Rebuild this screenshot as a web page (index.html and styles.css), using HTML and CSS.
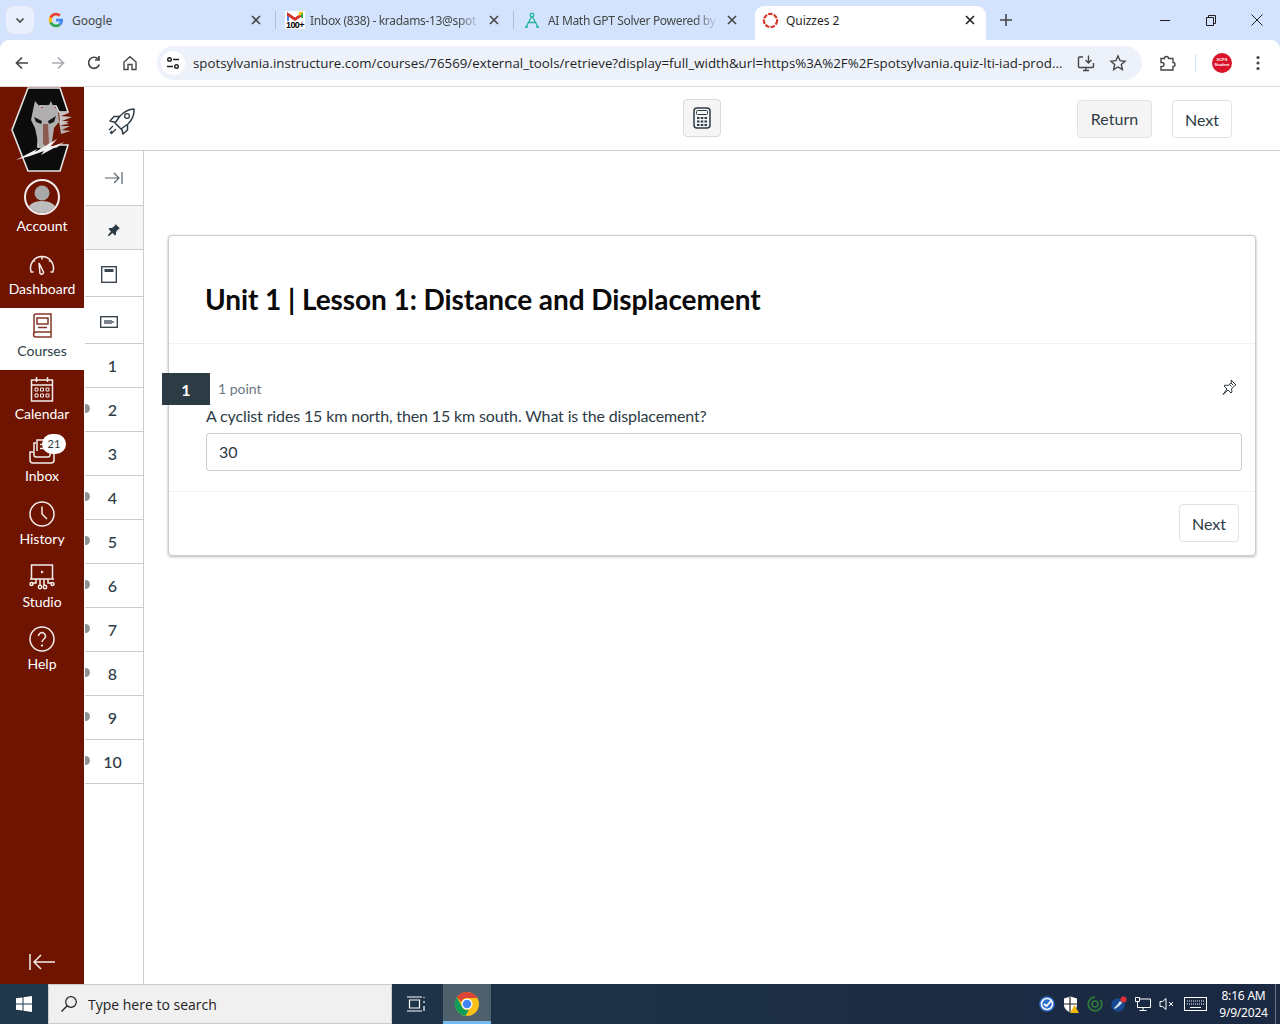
FILE: index.html
```html
<!DOCTYPE html>
<html lang="en">
<head>
<meta charset="utf-8">
<title>Quizzes 2</title>
<link rel="stylesheet" href="styles.css">
</head>
<body>
<div class="tabstrip">
  <div class="tab-search"><svg width="12" height="12" viewBox="0 0 12 12"><path d="M2.500 4.500 6 8l3.500-3.500" class="s-dark2"/></svg></div>
  <div class="tab">
    <svg class="fav" width="16" height="16" viewBox="0 0 48 48"><path fill="#4285F4" d="M45 24.500c0-1.600-.1-3.100-.4-4.500H24v8.500h11.800c-.5 2.700-2 5-4.400 6.600l7.100 5.500c4.100-3.800 6.500-9.500 6.500-16.100z"/><path fill="#34A853" d="M24 46c5.900 0 10.900-2 14.500-5.300l-7.100-5.500c-2 1.300-4.500 2.100-7.400 2.100-5.700 0-10.500-3.800-12.200-9H4.500v5.700C8.100 41.100 15.500 46 24 46z"/><path fill="#FBBC05" d="M11.800 28.200c-.9-2.700-.9-5.700 0-8.400v-5.700H4.500c-3 6-3 13.800 0 19.800z"/><path fill="#EA4335" d="M24 10.800c3.200 0 6.100 1.100 8.400 3.300l6.300-6.300C34.900 4.200 29.900 2 24 2 15.500 2 8.100 6.900 4.500 14.100l7.300 5.700c1.700-5.200 6.500-9 12.200-9z"/></svg>
    <span class="tab-title">Google</span>
    <svg class="tab-x" width="10" height="10" viewBox="0 0 10 10"><path d="M1 1l8 8M9 1l-8 8" class="s-dark2"/></svg>
  </div>
  <div class="tab tab-sep">
    <span class="gmail"><svg width="18" height="10" viewBox="0 0 18 10"><path fill="#4a86e8" d="M1 3h2v7H1z"/><path fill="#D93025" d="M1 1l8 5.500L17 1v3.500L9 10 1 4.500z"/><path fill="#FBBC04" d="M13 1h2l2-0.500v3L13 5z"/><path fill="#34A853" d="M15 3l2-1v5h-2z"/></svg><b class="gmail-count">100+</b></span>
    <span class="tab-title tab-fade">Inbox (838) - kradams-13@spot</span>
    <svg class="tab-x" width="10" height="10" viewBox="0 0 10 10"><path d="M1 1l8 8M9 1l-8 8" class="s-dark2"/></svg>
  </div>
  <div class="tab tab-sep">
    <svg class="fav" width="16" height="17" viewBox="0 0 16 17"><path d="M8 4 2 15M8 4l6 11M4.500 10.500h7M1 15h3M12 15h3" fill="none" stroke="#27b5a0" stroke-width="1.400"/><circle cx="8" cy="3" r="1.800" fill="none" stroke="#27b5a0" stroke-width="1.300"/></svg>
    <span class="tab-title tab-fade">AI Math GPT Solver Powered by</span>
    <svg class="tab-x" width="10" height="10" viewBox="0 0 10 10"><path d="M1 1l8 8M9 1l-8 8" class="s-dark2"/></svg>
  </div>
  <div class="tab tab-active">
    <svg class="fav fav-active" width="17" height="17" viewBox="0 0 17 17"><circle cx="8.500" cy="8.500" r="6.600" fill="none" stroke="#d33a2c" stroke-width="2.200" stroke-dasharray="4.500 1.200"/></svg>
    <span class="tab-title tab-title-active">Quizzes 2</span>
    <svg class="tab-x" width="10" height="10" viewBox="0 0 10 10"><path d="M1 1l8 8M9 1l-8 8" class="s-black"/></svg>
  </div>
  <div class="tab-new"><svg width="12" height="12" viewBox="0 0 12 12"><path d="M6 0v12M0 6h12" class="s-dark2"/></svg></div>
  <div class="winctl">
    <span class="winbtn"><svg width="10" height="10" viewBox="0 0 10 10"><path d="M0 5.500h10" class="s-thin"/></svg></span>
    <span class="winbtn"><svg width="10" height="11" viewBox="0 0 10 11"><path d="M.5 2.500h7v8h-7zM2.500 2.500v-2h7v8h-2" class="s-thin"/></svg></span>
    <span class="winbtn"><svg width="12" height="12" viewBox="0 0 12 12"><path d="M.5.500l11 11M11.500.500l-11 11" class="s-thin"/></svg></span>
  </div>
</div>

<div class="toolbar">
  <div class="navbtns">
    <span class="tbtn"><svg width="16" height="16" viewBox="0 0 16 16"><path d="M14 8H2.500M8 2.500 2.500 8 8 13.500" class="s-tool"/></svg></span>
    <span class="tbtn"><svg width="16" height="16" viewBox="0 0 16 16"><path d="M2 8h11.500M8 2.500 13.500 8 8 13.500" class="s-tool s-muted"/></svg></span>
    <span class="tbtn"><svg width="16" height="16" viewBox="0 0 16 16"><path d="M13.300 9.500A5.500 5.500 0 1 1 12 3.900M13 1v4H9" class="s-tool"/></svg></span>
    <span class="tbtn"><svg width="16" height="16" viewBox="0 0 16 16"><path d="M2 7 8 1.800 14 7v7.500H10V9.500H6v5H2z" class="s-tool s-thin15"/></svg></span>
  </div>
  <div class="omnibox">
    <span class="site-ic"><svg width="14" height="14" viewBox="0 0 14 14"><circle cx="3.500" cy="3.500" r="1.800" class="s-site"/><path d="M7 3.500h6M1 10.500h6" class="s-site"/><circle cx="10.500" cy="10.500" r="1.800" class="s-site"/></svg></span>
    <span class="url">spotsylvania.instructure.com/courses/76569/external_tools/retrieve?display=full_width&amp;url=https%3A%2F%2Fspotsylvania.quiz-lti-iad-prod...</span>
    <svg class="omni-ic" width="18" height="18" viewBox="0 0 18 18"><path d="M6 3H2.500A1 1 0 0 0 1.500 4v8.500a1 1 0 0 0 1 1h13a1 1 0 0 0 1-1V9M6 16.500h6M9 13.500v3M11.500 1.500v7M8.500 6l3 3 3-3" class="s-tool s-thin15"/></svg>
    <svg class="omni-ic" width="18" height="18" viewBox="0 0 18 18"><path d="M9 2l2.100 4.700 5 .5-3.800 3.400 1.100 5L9 13l-4.400 2.600 1.100-5L1.900 7.200l5-.5z" class="s-tool s-thin15"/></svg>
  </div>
  <span class="tbtn tbtn-ext"><svg width="18" height="18" viewBox="0 0 18 18"><path d="M3 4.500h3.500a2 2 0 0 1 4 0H15v4a2 2 0 0 1 0 4v3.500H3v-3.500h1a2 2 0 0 0 0-4H3z" class="s-tool s-thin15"/></svg></span>
  <span class="tool-sep"></span>
  <span class="profile"><span class="profile-text">SCPS<br>Student</span></span>
  <span class="tbtn tbtn-menu"><svg width="4" height="16" viewBox="0 0 4 16"><circle cx="2" cy="2.500" r="1.600" fill="#444746"/><circle cx="2" cy="8" r="1.600" fill="#444746"/><circle cx="2" cy="13.500" r="1.600" fill="#444746"/></svg></span>
</div>

<div class="app">
  <nav class="sidenav">
    <svg class="logo" width="64" height="86" viewBox="0 0 64 86">
      <path d="M51 47 61 44 52 43 60 39 51 39 59 34 49 34z" fill="#b5b0ae"/>
      <path d="M18 1H50L58 25H49L46 19H30L28 60H46L49 58H58L50 84H18L2 43z" fill="#0c0c0c" stroke="#e4e4e4" stroke-width="1.600"/>
      <path d="M25 14l6 7 8-3 2-4 2 5 5 4 1 12-5 6-2 14-3 8h-8l-3-8-3-14-4-8 2-10z" fill="#b0aeae"/>
      <path d="M24 30l8 4-1 3-5-2zM46 29l-8 5 1 3 5-2z" fill="#161616"/>
      <path d="M33 37h5l1 19-3 5-3-5z" fill="#8c5a50"/>
      <path d="M49 24l10 2-8 3 11 1-10 4 7 3-9 1z" fill="#c9c4c2"/>
      <path d="M6 73 27 62l-2 3 22-13-7 8 15-5-24 13 3-4-14 5z" fill="#f2f2f2"/>
    </svg>
    <a class="nav-item nav-account">
      <span class="avatar"><svg width="32" height="32" viewBox="0 0 32 32"><circle cx="16" cy="12" r="7.500" fill="#a8a8a8"/><path d="M1 32c0-8 6-12 15-12s15 4 15 12z" fill="#bdbdbd"/></svg></span>
      <span class="nav-label">Account</span>
    </a>
    <a class="nav-item">
      <svg class="nav-ic" width="26" height="24" viewBox="0 0 26 24"><path d="M4.500 19H2.200A11.500 11.500 0 1 1 23.800 19H21.500M13 6.500V4M6 8.500l-1.500-1.500M20 8.500 21.500 7M10 10l4.500 9a2 2 0 0 1-3.500 1.500z" class="s-nav"/></svg>
      <span class="nav-label">Dashboard</span>
    </a>
    <a class="nav-item nav-active">
      <svg class="nav-ic" width="22" height="26" viewBox="0 0 22 26"><path d="M3 21V3a2 2 0 0 1 2-2h15v18H5a2.500 2.500 0 0 0 0 5h15v-5M6 5h11v6H6zM7 14.500h9" class="s-active"/></svg>
      <span class="nav-label">Courses</span>
    </a>
    <a class="nav-item">
      <svg class="nav-ic" width="24" height="26" viewBox="0 0 24 26"><path d="M1.500 4h21v21h-21zM1.500 9h21M6.500 1v5M17.500 1v5" class="s-nav"/><path d="M5 12h3v3H5zM10.500 12h3v3h-3zM16 12h3v3h-3zM5 18h3v3H5zM10.500 18h3v3h-3zM16 18h3v3h-3z" class="s-nav s-thin-nav"/></svg>
      <span class="nav-label">Calendar</span>
    </a>
    <a class="nav-item">
      <svg class="nav-ic" width="26" height="26" viewBox="0 0 26 26"><path d="M5 13V5h2M8 13V2h12v11M11 6.500h6M11 10.500h6" class="s-nav"/><path d="M1 14h4v3a2 2 0 0 0 2 2h12a2 2 0 0 0 2-2v-3h4v8a3 3 0 0 1-3 3H4a3 3 0 0 1-3-3z" class="s-nav"/></svg>
      <span class="nav-label">Inbox</span>
      <span class="badge">21</span>
    </a>
    <a class="nav-item">
      <svg class="nav-ic" width="26" height="26" viewBox="0 0 26 26"><circle cx="13" cy="13" r="12" class="s-nav"/><path d="M13 5.500V13l5 5" class="s-nav"/></svg>
      <span class="nav-label">History</span>
    </a>
    <a class="nav-item">
      <svg class="nav-ic" width="26" height="26" viewBox="0 0 26 26"><path d="M2.500 1h21v14h-21zM1 15h24M7 15v4H3.500M11 15v6M15 15v6M19 15v4h3.500" class="s-nav"/><circle cx="2.500" cy="20" r="1.500" class="s-nav"/><circle cx="11" cy="23" r="1.700" class="s-nav"/><circle cx="16" cy="23" r="1.700" class="s-nav"/><circle cx="23.500" cy="20" r="1.500" class="s-nav"/><path d="M12 6.500l3 1.500-3 1.500z" fill="#fff"/></svg>
      <span class="nav-label">Studio</span>
    </a>
    <a class="nav-item">
      <svg class="nav-ic" width="26" height="26" viewBox="0 0 26 26"><circle cx="13" cy="13" r="12" class="s-nav"/><path d="M9.500 10a3.500 3.500 0 1 1 5.500 3c-1.300.9-2 1.500-2 3" class="s-nav"/><circle cx="13" cy="19.500" r="1.100" fill="#fff"/></svg>
      <span class="nav-label">Help</span>
    </a>
    <svg class="nav-collapse" width="26" height="18" viewBox="0 0 26 18"><path d="M1 1v16M26 9H5M12 2 5 9l7 7" class="s-nav"/></svg>
  </nav>

  <div class="content">
    <header class="quiz-top">
      <svg class="rocket" width="30" height="30" viewBox="0 0 30 30"><path d="M27 2c.5 6-2 11-6 15l-7 5-6-6 5-7c4-4 9-7 14-7zM12.500 9.500H7L3 14l6 1.500M20.500 17.500V23l-4.500 4-1.500-6" fill="none" stroke="#2d3b45" stroke-width="1.500" stroke-linejoin="round"/><circle cx="20" cy="9" r="2.400" fill="none" stroke="#2d3b45" stroke-width="1.300"/><path d="M6 19l-4 4M9 22l-5 5M5 24l-2 2" fill="none" stroke="#2d3b45" stroke-width="1.300"/></svg>
      <span class="calc"><svg width="18" height="22" viewBox="0 0 18 22"><rect x="1" y="1" width="16" height="20" rx="3" fill="none" stroke="#2d3b45" stroke-width="1.500"/><rect x="3.500" y="3.500" width="11" height="4" rx="1" fill="none" stroke="#2d3b45"/><path d="M4 10h2.500v2H4zM7.800 10h2.500v2H7.800zM11.500 10H14v2h-2.500zM4 13.500h2.500v2H4zM7.800 13.500h2.500v2H7.800zM11.500 13.500H14v2h-2.500zM4 17h2.500v2H4zM7.800 17h2.500v2H7.800zM11.500 17H14v2h-2.500z" fill="#2d3b45"/></svg></span>
      <div class="top-actions">
        <button class="btn btn-return">Return</button>
        <button class="btn btn-next">Next</button>
      </div>
    </header>
    <div class="quiz-body">
      <aside class="rail">
        <div class="rail-row rail-collapse"><svg width="18" height="14" viewBox="0 0 18 14"><path d="M0 7h14M9 2l5 5-5 5M17 1v12" fill="none" stroke="#56646e" stroke-width="1.200"/></svg></div>
        <div class="rail-row rail-pin"><svg width="14" height="14" viewBox="0 0 14 14"><path d="M8.500 1 13 5.500l-1.500.5-2.500 3v2.500l-1 1L5.500 10 2 13l-1 0 0-1 3-3.500-2.500-2.500 1-1H5l3-2.500z" fill="#2d3b45"/></svg></div>
        <div class="rail-row rail-tall"><svg width="16" height="17" viewBox="0 0 16 17"><rect x=".7" y=".7" width="14.600" height="15.600" fill="none" stroke="#3c4851" stroke-width="1.400"/><rect x="3.500" y="3" width="9" height="3" fill="#3c4851"/></svg></div>
        <div class="rail-row rail-tall"><svg width="18" height="12" viewBox="0 0 18 12"><rect x=".7" y=".7" width="16.600" height="10.600" fill="none" stroke="#2d3b45" stroke-width="1.300"/><path d="M4 4h8v1h2v2h-2v1H4z" fill="#7a858d"/></svg></div>
        <div class="rail-row rail-num">1</div>
        <div class="rail-row rail-num rail-mark">2</div>
        <div class="rail-row rail-num">3</div>
        <div class="rail-row rail-num rail-mark">4</div>
        <div class="rail-row rail-num rail-mark">5</div>
        <div class="rail-row rail-num rail-mark">6</div>
        <div class="rail-row rail-num rail-mark">7</div>
        <div class="rail-row rail-num rail-mark">8</div>
        <div class="rail-row rail-num rail-mark">9</div>
        <div class="rail-row rail-num rail-mark">10</div>
      </aside>
      <main class="stage">
        <section class="card">
          <h1 class="card-title">Unit 1 | Lesson 1: Distance and Displacement</h1>
          <div class="question">
            <div class="q-head">
              <span class="q-num">1</span>
              <span class="q-points">1 point</span>
              <svg class="q-pin" width="18" height="18" viewBox="0 0 18 18"><path d="M11 2l5 5-1.500.5-3 3.500.5 3-1 1-3-3-5 4.500L7 11 4 8l1-1 3 .5L11.500 4.500zM11 5l2 2M9.500 6.500l2 2" fill="none" stroke="#2d3b45" stroke-width="1"/></svg>
            </div>
            <p class="q-text">A cyclist rides 15 km north, then 15 km south. What is the displacement?</p>
            <div class="q-input">30</div>
          </div>
          <div class="card-foot"><button class="btn btn-foot">Next</button></div>
        </section>
      </main>
    </div>
  </div>
</div>

<footer class="taskbar">
  <span class="start"><svg width="16" height="16" viewBox="0 0 16 16"><path d="M0 2.300 6.500 1.400V7.500H0zM7.500 1.200 16 0V7.500H7.500zM0 8.500H6.500V14.600L0 13.700zM7.500 8.500H16V16L7.500 14.800z" fill="#fff"/></svg></span>
  <div class="search"><svg width="18" height="18" viewBox="0 0 18 18"><circle cx="11" cy="7" r="5.300" fill="none" stroke="#222" stroke-width="1.200"/><path d="M7.200 10.800 1.500 16.500" stroke="#222" stroke-width="1.300"/></svg><span class="search-text">Type here to search</span></div>
  <span class="taskview"><svg width="18" height="16" viewBox="0 0 18 16"><path d="M2.500 4h10v8h-10zM0 1h15M0 15h15M17 1v1M17 5v2M17 10v5" fill="none" stroke="#fff" stroke-width="1.200"/></svg></span>
  <span class="chrome"><svg width="24" height="24" viewBox="0 0 24 24"><circle cx="12" cy="12" r="12" fill="#FBC116"/><path d="M12 0a12 12 0 0 1 10.400 6H12a6 6 0 0 0-5.700 4.100L1.900 5.300A12 12 0 0 1 12 0z" fill="#DB4437"/><path d="M1.900 5.300 7 14.800a6 6 0 0 0 6.800 3L10.600 24A12 12 0 0 1 1.900 5.300z" fill="#0F9D58"/><circle cx="12" cy="12" r="5.500" fill="#fff"/><circle cx="12" cy="12" r="4.300" fill="#4285F4"/></svg></span>
  <div class="tray">
    <svg class="tray-ic" width="16" height="16" viewBox="0 0 16 16"><circle cx="8" cy="8" r="7.800" fill="#2f6fd0"/><circle cx="8" cy="8" r="5.500" fill="none" stroke="#fff" stroke-width="1.500"/><path d="M5 8l2.500 2L12 5" fill="none" stroke="#fff" stroke-width="1.800"/></svg>
    <svg class="tray-ic" width="16" height="17" viewBox="0 0 16 17"><path d="M1 2.500 7.500.5 14 2.500V9c0 3.500-3 6-6.500 7.500C4 15 1 12.500 1 9z" fill="#fff"/><path d="M7 1v15M1 8h13" stroke="#222" stroke-width="1.200"/><path d="M11.500 9l4.500 8H7z" fill="#f0b90b"/></svg>
    <svg class="tray-ic" width="16" height="16" viewBox="0 0 16 16"><circle cx="8" cy="8" r="6.800" fill="none" stroke="#2f7a3a" stroke-width="1.800" stroke-dasharray="32 6"/><circle cx="8" cy="8" r="3" fill="none" stroke="#2f7a3a" stroke-width="1.600"/></svg>
    <svg class="tray-ic" width="16" height="16" viewBox="0 0 16 16"><circle cx="7" cy="9" r="6.800" fill="#174a90"/><path d="M3 12l3-3 3-4 2 2-3 3-4 3z" fill="#d9e6f5"/><circle cx="12.500" cy="3.500" r="3" fill="#e5303a"/></svg>
    <svg class="tray-ic" width="16" height="16" viewBox="0 0 16 16"><path d="M.5 1.500h4v4h-4zM4.500 3h11v8.500h-13V5.500M8 11.500v3M4.500 14.500h7" fill="none" stroke="#fff" stroke-width="1"/></svg>
    <svg class="tray-ic" width="16" height="16" viewBox="0 0 16 16"><path d="M1 5.500h2.500L7 2.500v11L3.500 10.500H1zM10 6l4 4M14 6l-4 4" fill="none" stroke="#fff" stroke-width="1"/></svg>
    <svg class="tray-kbd" width="23" height="14" viewBox="0 0 23 14"><rect x=".5" y=".5" width="22" height="13" fill="none" stroke="#fff"/><path d="M3 4h17M3 7h17" stroke="#fff" stroke-dasharray="1 1"/><path d="M6 10.500h11" stroke="#fff"/></svg>
    <div class="clock"><span>8:16 AM</span><span>9/9/2024</span></div>
    <span class="desk-line"></span>
  </div>
</footer>
</body>
</html>
```
FILE: styles.css
```css
* { box-sizing: border-box; }
html, body { margin: 0; padding: 0; }
body { width: 1280px; height: 1024px; overflow: hidden; display: flex; flex-direction: column; background: #d3e3fd; font-family: "Lato", "Liberation Sans", sans-serif; color: #2d3b45; }
svg { display: block; flex: none; }

.s-dark2, .s-black, .s-thin, .s-tool, .s-site, .s-nav, .s-active { fill: none; }
.s-dark2 { stroke: #444746; stroke-width: 1.600; }
.s-black { stroke: #1f1f1f; stroke-width: 1.600; }
.s-thin { stroke: #1f1f1f; stroke-width: 1; }
.s-tool { stroke: #444746; stroke-width: 1.700; }
.s-thin15 { stroke-width: 1.400; }
.s-muted { stroke: #a9adb1; }
.s-site { stroke: #1f1f1f; stroke-width: 1.400; }
.s-nav { stroke: #fff; stroke-width: 1.500; opacity: .92; }
.s-thin-nav { stroke-width: 1; }
.s-active { stroke: #6f1400; stroke-width: 1.500; opacity: .85; }

/* browser chrome */
.tabstrip { height: 40px; flex: none; background: #d3e3fd; display: flex; align-items: flex-end; font-family: "Noto Sans", "Open Sans", sans-serif; font-size: 12px; color: #444746; position: relative; }
.tab-search { width: 28px; height: 28px; margin: 0 4px 6px 6px; border-radius: 8px; background: #e9f0fc; display: flex; align-items: center; justify-content: center; }
.tab { width: 238px; height: 34px; display: flex; align-items: center; padding: 0 15px 6px 10px; position: relative; }
.tab-sep::before { content: ""; position: absolute; left: -1px; top: 5px; width: 1px; height: 18px; background: #a9c0e6; }
.fav { margin-right: 8px; }
.fav-active { margin-right: 7px; }
.gmail { position: relative; width: 20px; height: 18px; margin-right: 5px; margin-left: -1px; flex: none; background: #fff; padding: 0 1px; }
.gmail-count { position: absolute; left: 1px; bottom: -1px; font: 700 9px/9px "Liberation Sans", sans-serif; color: #000; letter-spacing: -.6px; }
.tab-title { flex: 1; white-space: nowrap; overflow: hidden; min-width: 0; letter-spacing: -.05px; }
.tab-fade { letter-spacing: -.32px; -webkit-mask-image: linear-gradient(to right, #000 86%, transparent); mask-image: linear-gradient(to right, #000 86%, transparent); }
.tab-x { margin-left: 8px; }
.tab-active { width: 231px; margin-left: 3px; background: #fff; border-radius: 9px 9px 0 0; padding: 0 11px 6px 7px; color: #1f1f1f; z-index: 1; }
.tab-title-active { color: #1f1f1f; }
.tab-new { width: 40px; display: flex; justify-content: center; padding-bottom: 14px; }
.winctl { margin-left: auto; display: flex; height: 40px; align-items: center; }
.winbtn { width: 46px; display: flex; justify-content: center; }

.toolbar { height: 47px; flex: none; background: #fff; border-bottom: 1px solid #dcdcdc; display: flex; align-items: center; font-family: "Open Sans", "Noto Sans", sans-serif; padding: 0 0 1px 4px; border-radius: 9px 9px 0 0; position: relative; }
.navbtns { display: flex; }
.tbtn { width: 36px; height: 34px; display: flex; align-items: center; justify-content: center; flex: none; }
.omnibox { width: 985px; height: 34px; margin-left: 9px; background: #edf2fa; border-radius: 17px; display: flex; align-items: center; padding-left: 4px; }
.site-ic { width: 24px; height: 24px; border-radius: 50%; background: #fff; display: flex; align-items: center; justify-content: center; flex: none; }
.url { margin-left: 8px; font-size: 13.300px; color: #1f1f1f; white-space: nowrap; width: 870px; overflow: hidden; }
.omni-ic { margin-left: 14px; }
.tbtn-ext { margin-left: 7px; }
.tool-sep { width: 1px; height: 18px; background: #d3e3fd; margin-left: 10px; }
.profile { width: 20px; height: 20px; border-radius: 50%; background: #d8132a; margin-left: 16px; display: flex; align-items: center; justify-content: center; }
.profile-text { font: 700 4px/4.500px "Liberation Sans", sans-serif; color: #fff; text-align: center; }
.tbtn-menu { margin-left: 8px; }

/* app */
.app { flex: 1; min-height: 0; display: flex; background: #fff; }
.sidenav { width: 84px; flex: none; background: #6f1400; display: flex; flex-direction: column; align-items: stretch; color: #fff; }
.logo { margin: 0 auto; }
.nav-item { height: 62.600px; display: flex; flex-direction: column; align-items: center; justify-content: flex-end; padding-bottom: 10px; position: relative; font-size: 14px; line-height: 18px; color: #fff; }
.nav-ic { margin-bottom: 3px; }
.nav-account { height: 64px; padding-bottom: 2px; margin-bottom: 8px; }
.avatar { width: 36px; height: 36px; border-radius: 50%; border: 2px solid #f4eeee; overflow: hidden; margin-bottom: 2px; background: #6f1400; }
.nav-active { background: #fff; color: #2d3b45; }
.badge { position: absolute; left: 42px; top: 1px; min-width: 24px; height: 20px; background: #fff; color: #2d3b45; border-radius: 10px; font-size: 11px; line-height: 20px; text-align: center; }
.nav-collapse { margin: auto 0 13px 29px; }

.content { flex: 1; min-width: 0; display: flex; flex-direction: column; }
.quiz-top { height: 64px; flex: none; border-bottom: 1px solid #c7cdd1; display: flex; align-items: center; }
.rocket { margin: 6px 0 0 23px; }
.calc { width: 38px; height: 38px; margin-left: 546px; margin-top: -2px; background: #f5f5f5; border: 1px solid #d7dade; border-radius: 4px; display: flex; align-items: center; justify-content: center; }
.top-actions { margin-left: auto; margin-right: 48px; padding-top: 1px; display: flex; gap: 20px; align-items: center; }
.btn { font-family: "Lato", sans-serif; font-size: 16px; color: #2d3b45; height: 38px; border-radius: 4px; border: 1px solid #e0e3e6; background: #fff; padding: 0 12px; display: block; }
.btn-return { background: #f5f5f5; width: 75px; margin-top: -1px; }
.btn-next { width: 60px; }

.quiz-body { flex: 1; min-height: 0; display: flex; }
.rail { width: 60px; flex: none; border-left: 1px solid #fff; border-right: 1px solid #c7cdd1; }
.rail-row { display: flex; align-items: center; justify-content: center; border-bottom: 1px solid #c7cdd1; height: 44px; position: relative; }
.rail-collapse { height: 55px; }
.rail-pin { background: #f5f5f5; padding-top: 4px; }
.rail-tall { height: 47px; padding: 3px 10px 0 0; }
.rail-num { font-size: 16px; font-weight: 500; color: #2d3b45; padding: 0 3px 1px 0; }
.rail-mark::before { content: ""; position: absolute; left: 0; top: 16px; width: 5px; height: 9px; border-radius: 0 5px 5px 0; background: #8d959b; }

.stage { flex: 1; min-width: 0; padding: 84px 24px 0 24px; }
.card { height: 321px; border: 1px solid #c7cdd1; border-radius: 4px; box-shadow: 0 1px 3px rgba(0,0,0,.28); background: #fff; display: flex; flex-direction: column; }
.card-title { margin: 0; height: 108px; padding: 45px 0 0 36px; font-size: 28px; font-weight: 700; line-height: 36px; letter-spacing: -.07px; color: #0a0a0a; border-bottom: 1px solid #f0f1f2; }
.question { height: 148px; border-bottom: 1px solid #f0f1f2; padding: 29px 13px 0 37px; }
.q-head { height: 32px; display: flex; align-items: center; }
.q-num { width: 48px; height: 32px; margin-left: -44px; background: #2d3b45; color: #fff; font-size: 16px; font-weight: 700; display: flex; align-items: center; justify-content: center; }
.q-points { font-size: 14px; color: #6b7780; margin: 0 0 2px 8px; }
.q-pin { margin-left: auto; margin-right: 4px; margin-top: -4px; }
.q-text { margin: 0; font-size: 16px; line-height: 22px; letter-spacing: -.14px; color: #2d3b45; }
.q-input { margin-top: 6px; height: 38px; border: 1px solid #c7cdd1; border-radius: 3px; padding-left: 12px; font-size: 16px; line-height: 36px; color: #2d3b45; }
.card-foot { flex: 1; display: flex; justify-content: flex-end; padding: 12px 16px 0 0; }
.btn-foot { width: 60px; }

/* taskbar */
.taskbar { height: 40px; flex: none; background: linear-gradient(to right, #20394a, #1c2e44 60%, #1a2842); display: flex; align-items: center; font-family: "Open Sans", "Noto Sans", sans-serif; color: #fff; }
.start { width: 48px; display: flex; justify-content: center; }
.search { width: 344px; height: 40px; background: #f0f0f0; border: 1px solid #c9cdd0; display: flex; align-items: center; padding-left: 11px; color: #222; }
.search-text { font-size: 14px; margin-left: 10px; }
.taskview { width: 48px; display: flex; justify-content: center; }
.chrome { width: 48px; height: 40px; margin-left: 3px; background: #4e606c; border-bottom: 3px solid #76b9ed; display: flex; align-items: center; justify-content: center; padding-top: 2px; }
.tray { margin-left: auto; display: flex; align-items: center; height: 40px; }
.tray-ic { margin-right: 8px; }
.tray-kbd { margin-left: 1px; margin-right: 10px; }
.clock { width: 53px; display: flex; flex-direction: column; align-items: center; font-family: "Noto Sans", sans-serif; font-size: 12px; line-height: 17px; letter-spacing: -.2px; white-space: nowrap; }
.desk-line { width: 1px; height: 40px; background: #6a7684; margin-left: 5px; margin-right: 4px; }
```
